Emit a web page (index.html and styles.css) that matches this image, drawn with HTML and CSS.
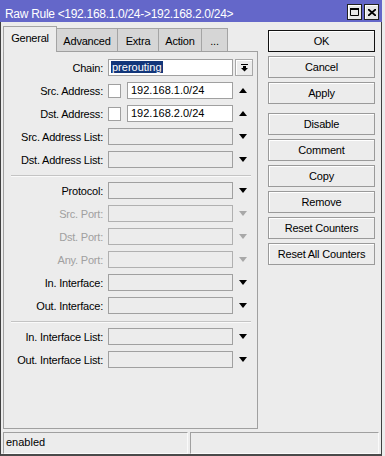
FILE: index.html
```html
<!DOCTYPE html>
<html lang="en">
<head>
    <meta charset="UTF-8">
    <title>Raw Rule</title>
    <link rel="stylesheet" href="styles.css">
</head>
<body>
    <div class="window">
        <div class="titlebar">
            <span class="title">Raw Rule &lt;192.168.1.0/24-&gt;192.168.2.0/24&gt;</span>
            <div class="tb-btns">
                <span class="tb-btn">
                    <svg width="9" height="8" viewBox="0 0 9 8"><path d="M0.5 0.5h8v7h-8z" fill="none" stroke="#000" stroke-width="1"/><rect x="0" y="0" width="9" height="2" fill="#000"/></svg>
                </span>
                <span class="tb-btn">
                    <svg width="8" height="7" viewBox="0 0 8 7"><path d="M0 0L8 7M8 0L0 7" stroke="#000" stroke-width="1.8"/></svg>
                </span>
            </div>
        </div>

        <div class="frame">
            <div class="main">
                <div class="left">
                    <div class="tabs">
                        <div class="tab active">General</div>
                        <div class="tab w-adv">Advanced</div>
                        <div class="tab w-extra">Extra</div>
                        <div class="tab w-action">Action</div>
                        <div class="tab w-more">...</div>
                    </div>
                    <div class="panel">
                        <div class="row">
                            <label>Chain:</label>
                            <div class="field white"><span class="selected">prerouting</span></div>
                            <span class="drop-btn">
                                <svg width="7" height="8" viewBox="0 0 7 8"><rect x="0" y="0" width="7" height="1" fill="#000"/><rect x="2" y="2" width="3" height="2" fill="#000"/><polygon points="0,4 7,4 3.5,7.5" fill="#000"/></svg>
                            </span>
                        </div>
                        <div class="row">
                            <label>Src. Address:</label>
                            <span class="check"></span>
                            <div class="field white short">192.168.1.0/24</div>
                            <span class="arrow up"></span>
                        </div>
                        <div class="row">
                            <label>Dst. Address:</label>
                            <span class="check"></span>
                            <div class="field white short">192.168.2.0/24</div>
                            <span class="arrow up"></span>
                        </div>
                        <div class="row">
                            <label>Src. Address List:</label>
                            <div class="field"></div>
                            <span class="arrow"></span>
                        </div>
                        <div class="row">
                            <label>Dst. Address List:</label>
                            <div class="field"></div>
                            <span class="arrow"></span>
                        </div>

                        <div class="sep"></div>

                        <div class="row">
                            <label>Protocol:</label>
                            <div class="field"></div>
                            <span class="arrow"></span>
                        </div>
                        <div class="row disabled">
                            <label>Src. Port:</label>
                            <div class="field"></div>
                            <span class="arrow"></span>
                        </div>
                        <div class="row disabled">
                            <label>Dst. Port:</label>
                            <div class="field"></div>
                            <span class="arrow"></span>
                        </div>
                        <div class="row disabled">
                            <label>Any. Port:</label>
                            <div class="field"></div>
                            <span class="arrow"></span>
                        </div>
                        <div class="row">
                            <label>In. Interface:</label>
                            <div class="field"></div>
                            <span class="arrow"></span>
                        </div>
                        <div class="row">
                            <label>Out. Interface:</label>
                            <div class="field"></div>
                            <span class="arrow"></span>
                        </div>

                        <div class="sep"></div>

                        <div class="row">
                            <label>In. Interface List:</label>
                            <div class="field"></div>
                            <span class="arrow"></span>
                        </div>
                        <div class="row">
                            <label>Out. Interface List:</label>
                            <div class="field"></div>
                            <span class="arrow"></span>
                        </div>
                    </div>
                </div>

                <div class="buttons">
                    <button class="btn default">OK</button>
                    <button class="btn">Cancel</button>
                    <button class="btn">Apply</button>
                    <button class="btn spaced">Disable</button>
                    <button class="btn">Comment</button>
                    <button class="btn">Copy</button>
                    <button class="btn">Remove</button>
                    <button class="btn">Reset Counters</button>
                    <button class="btn">Reset All Counters</button>
                </div>
            </div>

            <div class="status">
                <div class="st-cell">enabled</div>
                <div class="st-cell"></div>
            </div>
        </div>
    </div>
</body>
</html>
```

FILE: styles.css
```css
body {
    margin: 0;
    background: #ececec;
    font-family: "Liberation Sans", Arial, sans-serif;
    font-size: 11px;
    color: #000;
}

.window {
    width: 382px;
    height: 456px;
    display: flex;
    flex-direction: column;
}

.titlebar {
    height: 22px;
    background: #6467c9;
    display: flex;
    justify-content: space-between;
    align-items: flex-start;
    padding: 0 3px 0 5px;
}

.title {
    color: #fff;
    font-size: 12px;
    line-height: 14px;
    padding-top: 7px;
    letter-spacing: -0.3px;
}

.tb-btns {
    display: flex;
    gap: 2px;
    margin-top: 4px;
}

.tb-btn {
    width: 15px;
    height: 16px;
    box-sizing: border-box;
    border: 1px solid #202020;
    background: #e6e6e6;
    box-shadow: inset 1px 1px 0 #fff;
    display: flex;
    align-items: center;
    justify-content: center;
}

.frame {
    flex: 1;
    border-left: 1px solid #404040;
    border-right: 1px solid #404040;
    border-bottom: 2px solid #4a4a4a;
    padding: 0 2px;
    display: flex;
    flex-direction: column;
}

.main {
    height: 410px;
    display: flex;
}

.left {
    width: 255px;
    display: flex;
    flex-direction: column;
}

.tabs {
    height: 29px;
    display: flex;
    align-items: flex-end;
}

.tab {
    box-sizing: border-box;
    height: 23px;
    padding-top: 6px;
    text-align: center;
    letter-spacing: -0.2px;
    background: #d6d6d6;
    border: 1px solid #a4a4a4;
    border-bottom: none;
    border-left: none;
}

.tab.active {
    position: relative;
    z-index: 1;
    width: 54px;
    height: 26px;
    margin-bottom: -1px;
    padding-top: 5px;
    background: #ececec;
    border-left: 1px solid #a4a4a4;
}

.w-adv { width: 61px; }
.w-extra { width: 41px; }
.w-action { width: 43px; }
.w-more { width: 26px; }

.panel {
    height: 378px;
    box-sizing: border-box;
    border: 1px solid #a0a0a0;
    padding-top: 7px;
    display: flex;
    flex-direction: column;
    gap: 6px;
}

.row {
    height: 17px;
    display: flex;
    align-items: center;
}

.row label {
    width: 99px;
    margin-right: 5px;
    text-align: right;
    letter-spacing: -0.2px;
    white-space: nowrap;
}

.field {
    width: 125px;
    height: 17px;
    box-sizing: border-box;
    border: 1px solid #a0a0a0;
    background: #ececec;
    padding-left: 2px;
    line-height: 15px;
    white-space: nowrap;
}

.field.white {
    background: #fff;
}

.field.short {
    width: 106px;
    margin-left: 6px;
    padding-left: 3px;
}

.selected {
    background: #12367a;
    color: #fff;
    display: inline-block;
    line-height: 12px;
    padding: 0 1px;
}

.check {
    width: 13px;
    height: 14px;
    box-sizing: border-box;
    border: 1px solid #a0a0a0;
    background: #fff;
}

.drop-btn {
    width: 18px;
    height: 17px;
    margin-left: 2px;
    box-sizing: border-box;
    border: 1px solid #a8a8a8;
    background: #ececec;
    box-shadow: inset 1px 1px 0 #fff;
    display: flex;
    align-items: center;
    justify-content: center;
}

.arrow {
    width: 0;
    height: 0;
    margin-left: 6px;
    border-left: 4.5px solid transparent;
    border-right: 4.5px solid transparent;
    border-top: 5px solid #000;
}

.arrow.up {
    border-top: none;
    border-bottom: 5px solid #000;
}

.row.disabled label {
    color: #a0a0a0;
}

.row.disabled .field {
    border-color: #b0b0b0;
}

.row.disabled .arrow {
    border-top-color: #a8a8a8;
}

.sep {
    height: 1px;
    margin: 1px 6px -1px 7px;
    background: #c4c4c4;
    border-bottom: 1px solid #fafafa;
}

.buttons {
    width: 107px;
    margin-left: 10px;
    padding-top: 8px;
    display: flex;
    flex-direction: column;
    gap: 4px;
}

.btn {
    height: 22px;
    margin: 0;
    padding: 0;
    font-family: inherit;
    font-size: 11px;
    letter-spacing: -0.2px;
    color: #000;
    background: #ececec;
    border: 1px solid #9a9a9a;
    box-shadow: inset 1px 1px 0 #fff;
}

.btn.default {
    border-color: #111;
}

.btn.spaced {
    margin-top: 5px;
}

.status {
    height: 22px;
    display: grid;
    grid-template-columns: 185px 1fr;
    gap: 2px;
}

.st-cell {
    box-sizing: border-box;
    border-top: 1px solid #a0a0a0;
    border-left: 1px solid #a0a0a0;
    border-right: 1px solid #fafafa;
    border-bottom: 1px solid #fafafa;
    padding-left: 2px;
    line-height: 19px;
}
```
